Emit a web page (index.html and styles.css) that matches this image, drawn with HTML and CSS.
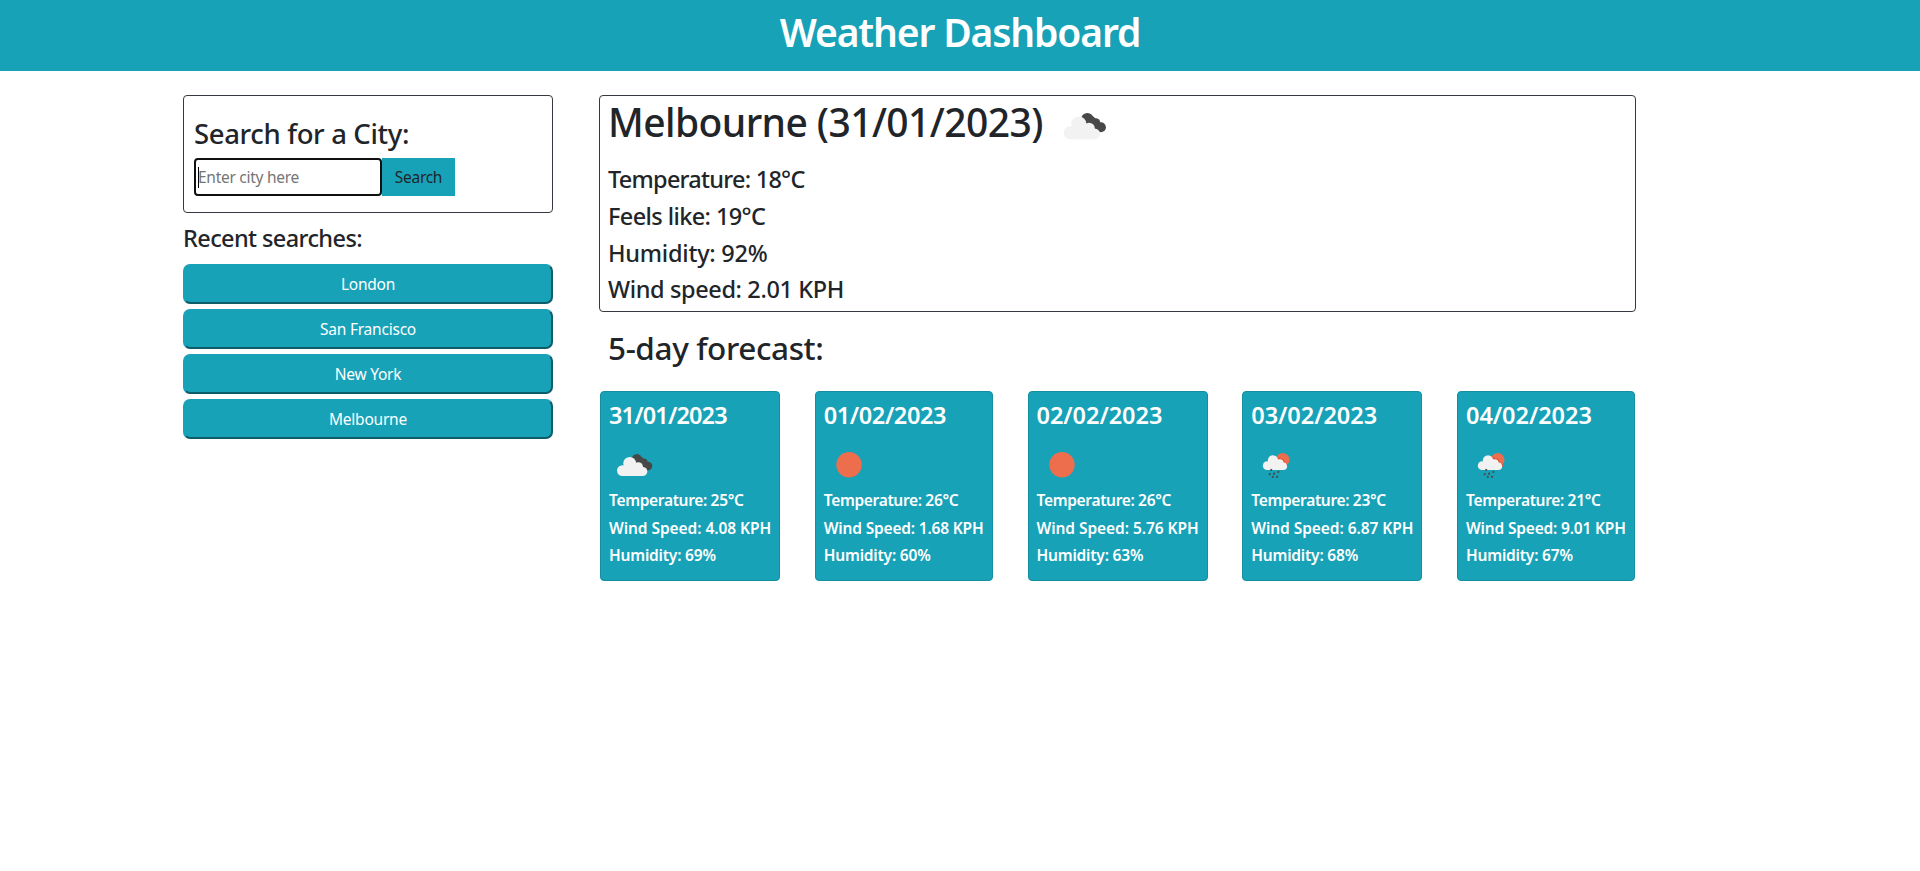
FILE: index.html
```
<!DOCTYPE html>
<html lang="en">
<head>
<meta charset="utf-8">
<title>Weather Dashboard</title>
<link rel="stylesheet" href="styles.css">
</head>
<body>
<svg class="sprite" aria-hidden="true">
  <symbol id="clouds" viewBox="0 0 50 50">
    <g fill="#484849"><circle cx="27.8" cy="19.3" r="5.2"/><circle cx="34.8" cy="22.3" r="3.8"/><circle cx="39.1" cy="26" r="4.2"/><path d="M25 22l8-5 8 10-4 3.1-9-2z"/></g>
    <g fill="#f2f2f2"><circle cx="13.4" cy="30.6" r="5.4"/><circle cx="20.7" cy="23.4" r="6.4"/><circle cx="29.2" cy="27" r="4.8"/><circle cx="33.8" cy="31.5" r="4.5"/><path d="M13.4 36h20.4v-6l-8-6-11 1z"/></g>
  </symbol>
  <symbol id="sun" viewBox="0 0 50 50"><circle cx="25" cy="24.8" r="12.7" fill="#ec6e4c"/></symbol>
  <symbol id="rain" viewBox="0 0 50 50">
    <circle cx="31.7" cy="19.8" r="6.8" fill="#ec6e4c"/>
    <path d="M25 19.5c1-2 3.5-1.5 4-.3 3 0 4.5 2 4.3 4.3 2 .2 3.2 1.5 3.4 3.2" fill="none" stroke="#e2482d" stroke-width="1.2"/>
    <g fill="#f2f2f2"><circle cx="16.2" cy="25.7" r="4.4"/><circle cx="22" cy="20.4" r="5.2"/><circle cx="28.7" cy="23.3" r="4"/><circle cx="32.3" cy="26.3" r="3.8"/><path d="M16.2 30.1h16v-6l-8-4-8 3z"/></g>
    <path d="M20.5 28.9l-.6 1.9M19.1 33.2l-.8 2.1M23.5 32.6l-.8 2.2M27.7 31.1l-.6 1.7M22.1 36l-.6 1.7M26.4 35.9l-.6 1.8" stroke="#484849" stroke-width="1.8"/>
  </symbol>
</svg>
<header class="topbar"><h1 class="title">Weather Dashboard</h1></header>
<div class="layout">
  <aside class="sidebar">
    <form class="search">
      <h3 class="search-title">Search for a City:</h3>
      <div class="search-row">
        <div class="field"><span class="caret"></span><input class="input" type="text" placeholder="Enter city here"></div>
        <button class="search-btn" type="button">Search</button>
      </div>
    </form>
    <h4 class="recent-title">Recent searches:</h4>
    <div class="recent">
      <button class="recent-btn">London</button>
      <button class="recent-btn">San Francisco</button>
      <button class="recent-btn">New York</button>
      <button class="recent-btn">Melbourne</button>
    </div>
  </aside>
  <main class="main">
    <section class="today">
      <div class="today-head"><h1 class="city">Melbourne (31/01/2023)</h1><svg class="today-icon"><use href="#clouds"/></svg></div>
      <h4 class="stat stat-temp">Temperature: 18°C</h4>
      <h4 class="stat stat-feels">Feels like: 19°C</h4>
      <h4 class="stat stat-hum">Humidity: 92%</h4>
      <h4 class="stat">Wind speed: 2.01 KPH</h4>
    </section>
    <h2 class="forecast-title">5-day forecast:</h2>
    <section class="forecast">
      <article class="card"><h4 class="date two-ones">31/01/2023</h4><svg class="icon"><use href="#clouds"/></svg><p class="line temp">Temperature: 25°C</p><p class="line">Wind Speed: 4.08 KPH</p><p class="line hum">Humidity: 69%</p></article>
      <article class="card slim"><h4 class="date one-one">01/02/2023</h4><svg class="icon"><use href="#sun"/></svg><p class="line temp">Temperature: 26°C</p><p class="line wind-slim">Wind Speed: 1.68 KPH</p><p class="line hum">Humidity: 60%</p></article>
      <article class="card"><h4 class="date">02/02/2023</h4><svg class="icon"><use href="#sun"/></svg><p class="line temp">Temperature: 26°C</p><p class="line">Wind Speed: 5.76 KPH</p><p class="line hum">Humidity: 63%</p></article>
      <article class="card"><h4 class="date">03/02/2023</h4><svg class="icon"><use href="#rain"/></svg><p class="line temp">Temperature: 23°C</p><p class="line">Wind Speed: 6.87 KPH</p><p class="line hum">Humidity: 68%</p></article>
      <article class="card slim"><h4 class="date">04/02/2023</h4><svg class="icon"><use href="#rain"/></svg><p class="line temp">Temperature: 21°C</p><p class="line wind-slim">Wind Speed: 9.01 KPH</p><p class="line hum">Humidity: 67%</p></article>
    </section>
  </main>
</div>
</body>
</html>
```
FILE: styles.css
```
*{box-sizing:border-box}
body{margin:0;background:#fff;color:#212529;font-family:"Noto Sans","Open Sans",sans-serif;font-size:15.5px;line-height:24px}
h1,h2,h3,h4,p{margin:0;font-weight:500;white-space:nowrap}
svg{display:block}
.sprite{display:none}
.topbar{height:71px;padding-top:8px;background:#17a2b8;color:#fff;text-align:center}
.title{font-size:39px;font-weight:600;line-height:48px;letter-spacing:-1.15px}
.layout{display:flex;gap:46px;padding:24px 284px 0 183px}
.sidebar{width:370px}
.search{height:118px;padding:21px 10px 0;border:1px solid #343a40;border-radius:4px}
.search-title{font-size:27.5px;line-height:34px;letter-spacing:-.35px;margin-bottom:7px}
.search-row{display:flex;height:38px}
.field{display:flex;align-items:center;width:188px;padding-left:2px;border:2px solid #101010;border-radius:4px}
.caret{width:1px;height:21px;margin-right:-1px;background:#000}
.input{width:170px;padding:0;border:0;outline:0;background:transparent;font:inherit;letter-spacing:-.27px}
.input::placeholder{color:#757575;opacity:1}
.search-btn{width:73px;padding:0;border:0;background:#17a2b8;color:#212529;font:inherit;letter-spacing:-.3px}
.recent-title{margin:11px 0;font-size:23.5px;line-height:29px;letter-spacing:-.6px}
.recent{display:grid;gap:5px}
.recent-btn{height:40px;padding:0;border:2px solid;border-color:#17a2b8 #0d5c68 #0d5c68 #17a2b8;border-radius:7px;background:#17a2b8;color:#fff;font:inherit;letter-spacing:-.22px}
.main{width:1037px}
.today{height:217px;padding:1px 8px 0;border:1px solid #343a40;border-radius:4px}
.today-head{display:flex;height:68px}
.city{width:446px;font-size:39px;line-height:49px;letter-spacing:-.58px}
.today-icon{width:60px;height:60px;margin-top:-1px}
.stat{margin-bottom:8px;font-size:23.5px;line-height:28.8px;letter-spacing:-.38px}
.stat-temp{letter-spacing:-.75px}
.stat-feels{letter-spacing:-.6px}
.stat-hum{letter-spacing:-.24px}
.forecast-title{margin:16px 0 24px 9px;font-size:31.5px;line-height:39px;letter-spacing:-.38px}
.forecast{display:flex;justify-content:space-between;padding:0 1px}
.card{width:180px;height:190px;padding:9px 8px 0;border:1px solid #148ea1;border-radius:4px;background:#17a2b8;color:#fff}
.slim{width:178px}
.date{font-size:23.5px;font-weight:600;line-height:29px;letter-spacing:-.05px}
.two-ones{letter-spacing:-.85px}
.one-one{letter-spacing:-.4px}
.icon{width:50px;height:50px;margin:10px 0 1px}
.line{margin-bottom:8px;font-weight:600;line-height:19.5px;letter-spacing:-.06px}
.temp{letter-spacing:-.33px}
.hum{letter-spacing:-.2px}
.wind-slim{letter-spacing:-.18px}
```
